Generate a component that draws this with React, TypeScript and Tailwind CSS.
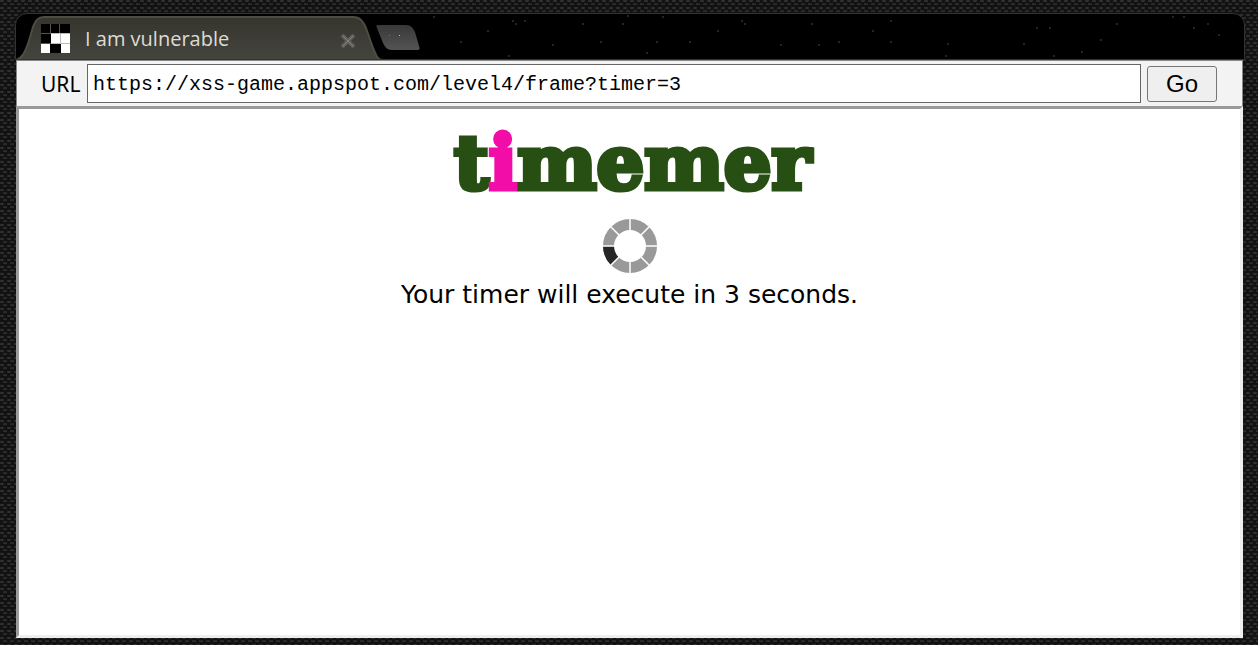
const STARS = [
  [2, 2], [81, 6], [84, 9], [93, 6], [29, 27], [56, 16], [77, 41], [121, 30], [151, 9], [169, 27],
  [191, 9], [196, 1], [231, 2], [225, 27], [215, 38], [258, 27], [286, 16], [310, 6], [313, 9],
  [349, 30], [380, 9], [387, 30], [407, 27], [441, 16], [459, 6], [459, 27], [516, 29], [514, 41],
  [605, 13], [592, 29], [618, 13], [622, 41], [650, 37], [669, 25], [685, 9], [741, 2], [752, 2],
  [762, 13], [776, 9], [787, 20],
];

function Weave() {
  return (
    <svg className="absolute inset-0 w-full h-full" aria-hidden="true">
      <defs>
        <pattern id="weave" width="7" height="7" patternUnits="userSpaceOnUse">
          <rect width="7" height="7" fill="#121212" />
          <rect x="0" y="0" width="4" height="2" rx="1" fill="#303030" />
          <rect x="3" y="3" width="4" height="1" fill="#262626" />
          <rect x="3" y="4" width="4" height="1" fill="#2d2d2d" />
        </pattern>
      </defs>
      <rect width="100%" height="100%" fill="url(#weave)" />
    </svg>
  );
}

function TabShape() {
  return (
    <svg className="absolute left-0 top-0" width="406" height="46" viewBox="0 0 406 46" aria-hidden="true">
      <defs>
        <linearGradient id="tab" x1="0" y1="0" x2="0" y2="1">
          <stop offset="0" stopColor="#35352e" />
          <stop offset="1" stopColor="#45453f" />
        </linearGradient>
        <linearGradient id="newtab" x1="0" y1="0" x2="0" y2="1">
          <stop offset="0" stopColor="#383838" />
          <stop offset="1" stopColor="#545454" />
        </linearGradient>
      </defs>
      <path
        d="M0 46C7 44 9 37 12 30L17 13C20 6 22 3 28 3H337C344 3 347 7 350 14L357 34C360 41 361 45 366 46Z"
        fill="url(#tab)"
      />
      <path
        d="M0 46C7 44 9 37 12 30L17 13C20 6 22 3 28 3H337C344 3 347 7 350 14L357 34C360 41 361 45 366 46"
        fill="none"
        stroke="#4e4d44"
        strokeWidth="2"
      />
      <path
        d="M362 11H390C395 11 397 14 399 18L403 32C404 35 404 36 401 36H376C371 36 369 33 367 29L361 14C360 12 360 11 362 11Z"
        fill="url(#newtab)"
      />
      <rect x="373" y="21" width="1" height="1" fill="#777" />
      <rect x="383" y="21" width="1" height="1" fill="#bbb" />
    </svg>
  );
}

function Favicon() {
  return (
    <svg width="29" height="29" viewBox="0 0 29 29" aria-hidden="true">
      <rect width="29" height="29" fill="#000" />
      <path d="M9.500 0V10M18.500 0V10M0 9.500H10M0 19.500H10" stroke="#55554f" fill="none" />
      <path d="M10 10H29V19H10ZM0 20H9V29H0ZM20 19H29V29H20Z" fill="#fff" />
      <path d="M19.500 9V19M10 19.500H29M10 9.500H29" stroke="#bbb" />
    </svg>
  );
}

function TabStrip() {
  return (
    <header className="relative -ml-px -mr-0.5 h-[47px] overflow-hidden rounded-t-xl border border-[#333] bg-black">
      <svg className="absolute left-[415px] top-0" width="814" height="46" aria-hidden="true">
        {STARS.map(([x, y]) => (
          <rect key={`${x}-${y}`} x={x} y={y} width="2" height="2" fill="#242424" />
        ))}
      </svg>
      <TabShape />
      <div className="relative flex h-full w-[340px] items-center pl-[25px] pt-1">
        <Favicon />
        <span className="ml-[15px] flex-1 whitespace-nowrap font-['Open_Sans',sans-serif] text-[20px] leading-7 text-[#dfdbd2]">
          I am vulnerable
        </span>
        <button type="button" aria-label="Close tab" className="pt-1">
          <svg width="16" height="16" viewBox="0 0 16 16" fill="none">
            <path d="M2 2L14 14M14 2L2 14" stroke="#5f5e57" strokeWidth="4" />
            <path d="M3 3L13 13M13 3L3 13" stroke="#85847b" strokeWidth="1" />
          </svg>
        </button>
      </div>
    </header>
  );
}

function UrlBar() {
  return (
    <form
      className="flex h-[46px] items-center border border-b-0 border-[#888] bg-[#f3f3f3] pl-6 pr-[25px]"
      onSubmit={(e) => e.preventDefault()}
    >
      <label htmlFor="url" className="w-[46px] font-['Noto_Sans',sans-serif] text-[21px] leading-7 text-black">
        URL
      </label>
      <input
        id="url"
        type="text"
        defaultValue="https://xss-game.appspot.com/level4/frame?timer=3"
        className="h-[39px] min-w-0 flex-1 border border-[#666] bg-white px-[5px] pt-0.5 font-['Liberation_Mono',monospace] text-[20px] text-black outline-none"
      />
      <button
        type="submit"
        className="ml-1.5 h-9 w-[70px] rounded-[3px] border border-[#767676] bg-[#efefef] font-['Liberation_Sans',Arial,sans-serif] text-[24px] leading-8 text-black"
      >
        Go
      </button>
    </form>
  );
}

function Spinner() {
  return (
    <svg width="54" height="54" viewBox="0 0 54 54" fill="none" aria-hidden="true">
      <circle cx="27" cy="27" r="21.500" stroke="#999" strokeWidth="11" />
      <path d="M5.500 27A21.500 21.500 0 0 0 11.800 42.200" stroke="#262626" strokeWidth="11" />
      <path d="M27 0V54M0 27H54M7 7L47 47M47 7L7 47" stroke="#fff" strokeWidth="1.500" />
    </svg>
  );
}

export default function App() {
  return (
    <div className="relative flex min-h-screen flex-col bg-[#121212]">
      <Weave />
      <div className="relative mb-[7px] ml-4 mr-[15px] mt-[13px] flex flex-1 flex-col">
        <TabStrip />
        <UrlBar />
        <main className="flex flex-1 flex-col items-center border-[3px] border-b-[#eee] border-l-[#9a9a9a] border-r-[#eee] border-t-[#9a9a9a] bg-white">
          <h1 className="mt-2.5 pl-1.5 font-['DejaVu_Serif',serif] text-[75px] font-bold leading-[88px] text-[#274e13] [-webkit-text-stroke:5px_#274e13]">
            t<span className="text-[#f20da8] [-webkit-text-stroke:5px_#f20da8]">i</span>memer
          </h1>
          <div className="mt-3">
            <Spinner />
          </div>
          <p className="mt-1.5 font-['DejaVu_Sans',Verdana,sans-serif] text-[25px] leading-8 text-black">
            Your timer will execute in 3 seconds.
          </p>
        </main>
      </div>
    </div>
  );
}
